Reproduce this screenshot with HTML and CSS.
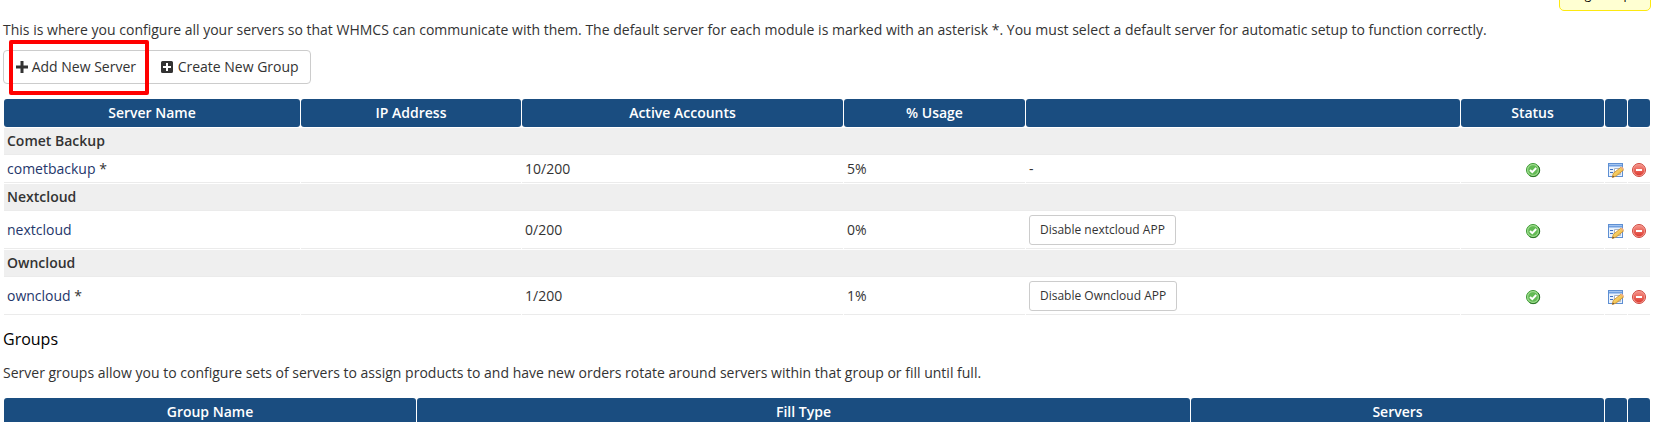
FILE: index.html
```html
<!DOCTYPE html>
<html lang="en"><head><meta charset="utf-8"><title>Servers</title>
<link rel="stylesheet" href="styles.css"></head>
<body>
<svg class="defs" width="0" height="0">
<defs>
<linearGradient id="rg" x1="0" y1="0" x2="0" y2="1"><stop offset="0" stop-color="#f58f85"/><stop offset="1" stop-color="#dd3b31"/></linearGradient>
<linearGradient id="pg" x1="0" y1="0" x2="1" y2="1"><stop offset="0" stop-color="#ffe98a"/><stop offset="1" stop-color="#e8a92c"/></linearGradient>
</defs>
<symbol id="ok" viewBox="0 0 16 16"><circle cx="8" cy="8" r="6.500" fill="#8fd67b" stroke="#3c9a35"/><circle cx="8" cy="8" r="5.300" fill="#62ba54" stroke="#b2e3a4" stroke-width=".7"/><path d="M13 3.800A6.500 6.500 0 0 1 4.600 13.600" fill="none" stroke="#2b7428"/><path d="M5 8l2.300 2.200L11.200 6" fill="none" stroke="#fff" stroke-width="2"/></symbol>
<symbol id="edit" viewBox="0 0 16 16"><rect x=".5" y="1.500" width="14" height="13" fill="#e9f2fd" stroke="#5e8fd3"/><path d="M1 2h13v2.500H1z" fill="#6f9fe0"/><path d="M1 2.500h13" stroke="#a4c5f0"/><path d="M2 7.500h3M2 10.500h3" stroke="#3c6fc0"/><path d="M6.500 6.500h6v6h-6z" fill="#fff" stroke="#a9b4c4"/><path d="M4.300 15.400l1-4.100 7.600-6 2.700 2.600-7.500 6.200z" fill="url(#pg)" stroke="#c98a2b" stroke-width=".8"/><path d="M12.500 5.500l1.300-.9 2 2-.9 1.300z" fill="#f4b183"/><path d="M4.300 15.500l.5-2 1.600 1.400z" fill="#664422"/></symbol>
<symbol id="del" viewBox="0 0 16 16"><circle cx="8" cy="8" r="6.500" fill="#f6a49a" stroke="#cf463d"/><circle cx="8" cy="8" r="5.400" fill="url(#rg)"/><path d="M5 7h6v2H5z" fill="#fff"/></symbol>
</svg>
<div class="help">Login Help</div>
<main class="content">
<p class="intro">This is where you configure all your servers so that WHMCS can communicate with them. The default server for each module is marked with an asterisk *. You must select a default server for automatic setup to function correctly.</p>
<div class="btn-group">
<a class="btn first"><svg class="plus" viewBox="0 0 12 14"><path d="M4.500 1h3v4.500H12v3H7.500V13h-3V8.500H0v-3h4.500z" fill="#333"/></svg> Add New Server<span class="highlight"></span></a><a class="btn last"><svg class="plus" viewBox="0 0 12 14"><path fill-rule="evenodd" d="M1.500 1h9A1.500 1.500 0 0 1 12 2.500v9a1.500 1.500 0 0 1-1.500 1.500h-9A1.500 1.500 0 0 1 0 11.500v-9A1.500 1.500 0 0 1 1.500 1zM5 3v3H2v2h3v3h2V8h3V6H7V3z" fill="#333"/></svg> Create New Group</a>
</div>
<table class="datatable servers">
<colgroup><col class="c-name"><col class="c-ip"><col class="c-acc"><col class="c-use"><col><col class="c-status"><col class="c-icon"><col class="c-icon"></colgroup>
<tr><th>Server Name</th><th>IP Address</th><th>Active Accounts</th><th>% Usage</th><th></th><th>Status</th><th></th><th></th></tr>
<tr class="module"><td colspan="8">Comet Backup</td></tr>
<tr><td><a>cometbackup</a> *</td><td></td><td>10/200</td><td>5%</td><td>-</td><td class="ic"><svg><use href="#ok"/></svg></td><td class="ic"><svg><use href="#edit"/></svg></td><td class="ic"><svg><use href="#del"/></svg></td></tr>
<tr class="module"><td colspan="8">Nextcloud</td></tr>
<tr class="tall"><td><a>nextcloud</a></td><td></td><td>0/200</td><td>0%</td><td><button class="btn-sm">Disable nextcloud APP</button></td><td class="ic"><svg><use href="#ok"/></svg></td><td class="ic"><svg><use href="#edit"/></svg></td><td class="ic"><svg><use href="#del"/></svg></td></tr>
<tr class="module"><td colspan="8">Owncloud</td></tr>
<tr class="tall"><td><a>owncloud</a> *</td><td></td><td>1/200</td><td>1%</td><td><button class="btn-sm">Disable Owncloud APP</button></td><td class="ic"><svg><use href="#ok"/></svg></td><td class="ic"><svg><use href="#edit"/></svg></td><td class="ic"><svg><use href="#del"/></svg></td></tr>
</table>
<h2>Groups</h2>
<p class="desc">Server groups allow you to configure sets of servers to assign products to and have new orders rotate around servers within that group or fill until full.</p>
<table class="datatable">
<colgroup><col class="g-name"><col class="g-fill"><col><col class="c-icon"><col class="c-icon"></colgroup>
<tr><th>Group Name</th><th>Fill Type</th><th>Servers</th><th></th><th></th></tr>
</table>
</main>
</body></html>
```
FILE: styles.css
```css
* { box-sizing: border-box; }
html, body { margin: 0; height: 422px; overflow: hidden; background: #fff; }
body { position: relative; font: 14px/20px "Open Sans", "Noto Sans", sans-serif; color: #333; }
.defs { position: absolute; }
.content { padding: 20px 2px 0 3px; }
p, h2 { margin: 0; }
.intro, .desc { letter-spacing: 0.005px; }
.help { position: absolute; top: -24px; right: 2px; width: 92px; height: 35px; padding: 9px 8px 0 0; border: 1px solid #fde910; border-radius: 5px; background: #ffffd2; font-size: 12px; line-height: 17px; text-align: center; white-space: nowrap; color: #000; }
.btn-group { display: flex; margin-top: 10px; }
.btn { position: relative; height: 34px; padding: 6px 12px; border: 1px solid #ccc; white-space: pre; }
.first { width: 146px; border-radius: 4px 0 0 4px; }
.last { width: 163px; margin-left: -1px; border-radius: 0 4px 4px 0; }
.plus { width: 12px; height: 14px; vertical-align: -2px; }
.last .plus { margin-right: 1px; }
.highlight { position: absolute; left: 5px; top: -11px; width: 140px; height: 55px; border: 4px solid #f00; border-radius: 2px; z-index: 2; }
.datatable { width: 1648px; table-layout: fixed; border-spacing: 1px; }
.servers { margin-top: 14px; }
th { height: 28px; padding: 0; background: #1a4d80; color: #fff; font-weight: 600; border-radius: 3px; }
td { height: 27px; padding: 3px; border-bottom: 1px solid #ebebeb; }
.tall td { height: 37px; }
.module td { background: #efefef; font-weight: 600; }
td a { color: #24366b; }
td.ic { padding: 2px 0; text-align: center; }
.ic svg { display: block; width: 16px; height: 16px; margin: 1px auto 0; }
.btn-sm { display: block; height: 30px; padding: 0 10px; border: 1px solid #ccc; border-radius: 3px; background: #fff; color: #333; font: 12px/18px "Open Sans", "Noto Sans", sans-serif; }
.c-name { width: 296px; }
.c-ip { width: 220px; }
.c-acc { width: 321px; }
.c-use { width: 181px; }
.c-status { width: 143px; }
.c-icon { width: 22px; }
.g-name { width: 412px; }
.g-fill { width: 773px; }
h2 { margin-top: 13px; font-size: 16px; line-height: 20px; font-weight: 400; color: #000; }
.desc { margin: 14px 0; }
```
